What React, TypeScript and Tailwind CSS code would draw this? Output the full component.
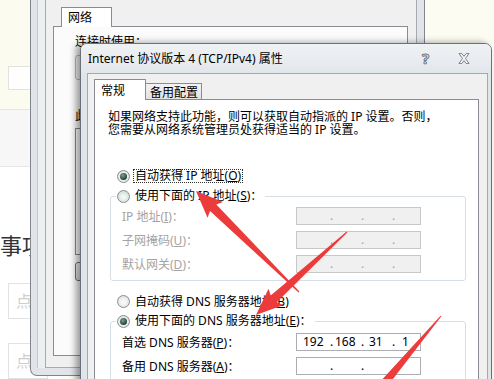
import React from 'react'

type Pt = [number, number]

function arrowPoints(tail: Pt, tip: Pt, w0: number, w1: number, headLen: number, headW: number) {
  const dx = tip[0] - tail[0]
  const dy = tip[1] - tail[1]
  const L = Math.hypot(dx, dy)
  const ux = dx / L
  const uy = dy / L
  const nx = -uy
  const ny = ux
  const bx = tip[0] - ux * headLen
  const by = tip[1] - uy * headLen
  const p = (x: number, y: number, s: number) => `${(x + nx * s).toFixed(1)},${(y + ny * s).toFixed(1)}`
  return [
    p(tail[0], tail[1], w0 / 2),
    p(bx, by, w1 / 2),
    p(bx - ux * 3, by - uy * 3, headW / 2),
    `${tip[0]},${tip[1]}`,
    p(bx - ux * 3, by - uy * 3, -headW / 2),
    p(bx, by, -w1 / 2),
    p(tail[0], tail[1], -w0 / 2),
  ].join(' ')
}

function Radio({ checked, tint }: { checked?: boolean; tint?: boolean }) {
  return (
    <span
      className={`flex h-[13px] w-[13px] shrink-0 items-center justify-center rounded-full border border-[#8b8e8f] ${
        tint
          ? 'bg-[radial-gradient(circle_at_50%_55%,#f2f7f4_20%,#bcd3c6)]'
          : 'bg-[radial-gradient(circle_at_50%_55%,#f7f7f7_25%,#d2d4d5)]'
      }`}
    >
      {checked && (
        <span className="h-[7px] w-[7px] rounded-full bg-[radial-gradient(circle_at_40%_35%,#7aa190,#1c3a2e_75%)]" />
      )}
    </span>
  )
}

function IpField({ values, disabled }: { values: string[]; disabled?: boolean }) {
  return (
    <div
      className={`flex h-[18px] w-[125px] shrink-0 items-center border text-[12px] leading-none ${
        disabled ? 'border-[#c8c8c8] bg-[#f0f0f0] text-[#a6a6a6]' : 'border-[#abadb3] bg-white text-black'
      }`}
    >
      <span className="w-[33px] shrink-0 pl-[6px]">{values[0]}</span>
      <span className="w-[4px] shrink-0">.</span>
      <span className="w-[27px] shrink-0 pl-[1px]">{values[1]}</span>
      <span className="w-[4px] shrink-0">.</span>
      <span className="w-[27px] shrink-0 pl-[4px]">{values[2]}</span>
      <span className="w-[10px] shrink-0">.</span>
      <span className="shrink-0">{values[3]}</span>
    </div>
  )
}

function FieldRow({ label, values, disabled }: { label: React.ReactNode; values: string[]; disabled?: boolean }) {
  return (
    <div className="flex h-[24px] items-start pl-[11px]">
      <div className={`flex h-[18px] w-[174px] shrink-0 items-center ${disabled ? 'text-[#a3a3a3]' : 'text-black'}`}>
        {label}
      </div>
      <IpField values={values} disabled={disabled} />
    </div>
  )
}

export default function App() {
  const empty = ['', '', '', '']
  return (
    <div className="relative h-[379px] w-[494px] overflow-hidden bg-[#fdfcf3] font-['Noto_Sans','Noto_Sans_CJK_SC',sans-serif] text-[12px] text-black">
      {/* web page behind the windows */}
      <div className="flex h-full w-[60px] flex-col">
        <div className="h-[110px] bg-[#fcfbf0] pl-[8px] pt-[66px]">
          <div className="h-[24px] w-[40px] border border-[#e3e3de] bg-[#fefefe]" />
        </div>
        <div className="h-[59px] border-y border-[#e6e6e6] bg-[#f7f7f7]" />
        <div className="flex-1 bg-white pt-[66px]">
          <div className="font-['Noto_Sans_CJK_SC',sans-serif] text-[22px] leading-[22px] text-[#333]">事项</div>
          <div className="ml-[8px] mt-[28px] flex h-[36px] w-[40px] items-center border border-[#e2e2e2] pl-[7px] text-[16px] text-[#cfcfcf]">
            点
          </div>
          <div className="ml-[8px] mt-[24px] flex h-[36px] w-[40px] items-center border border-[#e2e2e2] pl-[7px] text-[16px] text-[#cfcfcf]">
            点
          </div>
        </div>
      </div>

      {/* background window: 网络 properties */}
      <div className="absolute left-[30px] top-0 flex h-[376px] w-[395px] rounded-b-[7px] border-x border-b border-[#7f858b] bg-[#e1e5ea] pb-[7px] pl-[6px] pr-[7px]">
        <div className="flex flex-1 border-l border-[#c3c8ce] bg-[#eceff2] pl-[7px]">
          <div className="flex flex-1 flex-col border-x border-b border-[#a6abb1] bg-[#f0f0f0] pl-[7px] pr-[8px] pt-[7px]">
            <div className="flex h-[20px]">
              <div className="relative z-10 ml-[8px] h-[20px] w-[51px] border-x border-t border-[#898c95] bg-white pl-[6px] pt-[2px] leading-[15px]">
                网络
              </div>
            </div>
            <div className="-mt-px h-[330px] border border-[#898c95] bg-[#fbfbfb] pl-[21px] pt-[8px] leading-[13px]">
              <div>连接时使用：</div>
              <div className="mt-[7px] h-[25px] w-[320px] rounded-[3px] border border-[#b8b8b8] bg-[#f4f4f4]" />
              <div className="mt-[29px]">此连接使用下列项目(O)：</div>
              <div className="mt-[6px] h-[127px] w-[320px] border border-[#828790] bg-white" />
              <div className="mt-[7px] h-[19px] w-[75px] rounded-[3px] border border-[#707070] bg-[linear-gradient(#f2f2f2,#dcdcdc)]" />
            </div>
          </div>
        </div>
      </div>

      {/* foreground dialog */}
      <div className="absolute left-[80px] top-[43px] flex h-[345px] w-[412px] flex-col rounded-t-[7px] border border-[#6b7177] bg-[#e0e5ea] shadow-[-4px_0_7px_rgba(0,0,0,0.4)]">
        <div className="flex h-[29px] items-center rounded-t-[6px] bg-[linear-gradient(#f0f2f4,#e2e7ec)] pl-[7px] pr-[21px]">
          <span className="leading-none">Internet 协议版本 4 (TCP/IPv4) 属性</span>
          <span className="ml-auto mr-[25px] w-[11px] text-[15px] font-bold leading-none text-[#eef1f4] [-webkit-text-stroke:1px_#6f7b87]">
            ?
          </span>
          <svg width="12" height="11" viewBox="0 0 12 12">
            <polygon
              points="0.5,0.5 3.5,0.5 6,3.6 8.5,0.5 11.5,0.5 7.6,6 11.5,11.5 8.5,11.5 6,8.4 3.5,11.5 0.5,11.5 4.4,6"
              fill="#f3f5f7"
              stroke="#6f7b87"
              strokeWidth="1"
              strokeLinejoin="round"
            />
          </svg>
        </div>
        <div className="ml-[6px] mr-[3px] flex flex-1 flex-col border-x border-t border-[#a3a9b0] bg-[#f0f0f0] pl-[6px] pr-[8px] pt-[5px]">
          <div className="flex h-[21px] items-end">
            <div className="relative z-10 h-[21px] w-[52px] border-x border-t border-[#898c95] bg-white pl-[6px] pt-[4px] leading-[14px]">
              常规
            </div>
            <div className="-ml-px h-[17px] w-[57px] border border-[#898c95] bg-[linear-gradient(#f3f3f3,#e2e2e2)] pl-[4px] pt-[2px] leading-[13px]">
              备用配置
            </div>
          </div>
          <div className="-mt-px flex-1 border border-[#898c95] bg-white px-[13px] pt-[10px] leading-[13px]">
            <p>
              如果网络支持此功能，则可以获取自动指派的 IP 设置。否则，
              <br />
              您需要从网络系统管理员处获得适当的 IP 设置。
            </p>

            <div className="ml-[9px] mt-[30px] flex h-[20px] items-center gap-[3px]">
              <Radio checked />
              <span className="border border-dotted border-[#333] px-[1px] leading-[12px]">
                自动获得 IP 地址(<u>O</u>)
              </span>
            </div>

            <fieldset className="ml-[2px] w-[356px] rounded-[3px] border border-[#d5dfe5] pb-[1px] pt-[1px]">
              <legend className="ml-[5px] flex h-[20px] items-center gap-[3px] px-[1px]">
                <Radio tint />
                <span className="border border-transparent px-[1px] leading-[12px]">
                  使用下面的 IP 地址(<u>S</u>)：
                </span>
              </legend>
              <FieldRow disabled label={<>IP 地址(<u>I</u>)：</>} values={empty} />
              <FieldRow disabled label={<>子网掩码(<u>U</u>)：</>} values={empty} />
              <FieldRow disabled label={<>默认网关(<u>D</u>)：</>} values={empty} />
            </fieldset>

            <div className="ml-[9px] mt-[11px] flex h-[19px] items-center gap-[3px]">
              <Radio />
              <span className="border border-transparent px-[1px] leading-[12px]">
                自动获得 DNS 服务器地址(<u>B</u>)
              </span>
            </div>

            <fieldset className="ml-[2px] w-[356px] rounded-[3px] border border-[#d5dfe5] pt-[2px]">
              <legend className="ml-[5px] flex h-[20px] items-center gap-[3px] px-[1px]">
                <Radio checked />
                <span className="border border-transparent px-[1px] leading-[12px]">
                  使用下面的 DNS 服务器地址(<u>E</u>)：
                </span>
              </legend>
              <FieldRow label={<>首选 DNS 服务器(<u>P</u>)：</>} values={['192', '168', '31', '1']} />
              <FieldRow label={<>备用 DNS 服务器(<u>A</u>)：</>} values={empty} />
            </fieldset>
          </div>
        </div>
      </div>

      {/* red annotation arrows */}
      <svg className="pointer-events-none absolute left-0 top-0" width="494" height="379" viewBox="0 0 494 379">
        <polygon points={arrowPoints([299, 292], [196, 191], 1, 9, 24, 22)} fill="#ec3b3b" />
        <polygon points={arrowPoints([347, 232], [256, 315], 1, 9, 24, 22)} fill="#ec3b3b" />
        <polygon points={arrowPoints([441, 316], [356, 417], 1, 10, 24, 22)} fill="#ec3b3b" />
      </svg>
    </div>
  )
}
